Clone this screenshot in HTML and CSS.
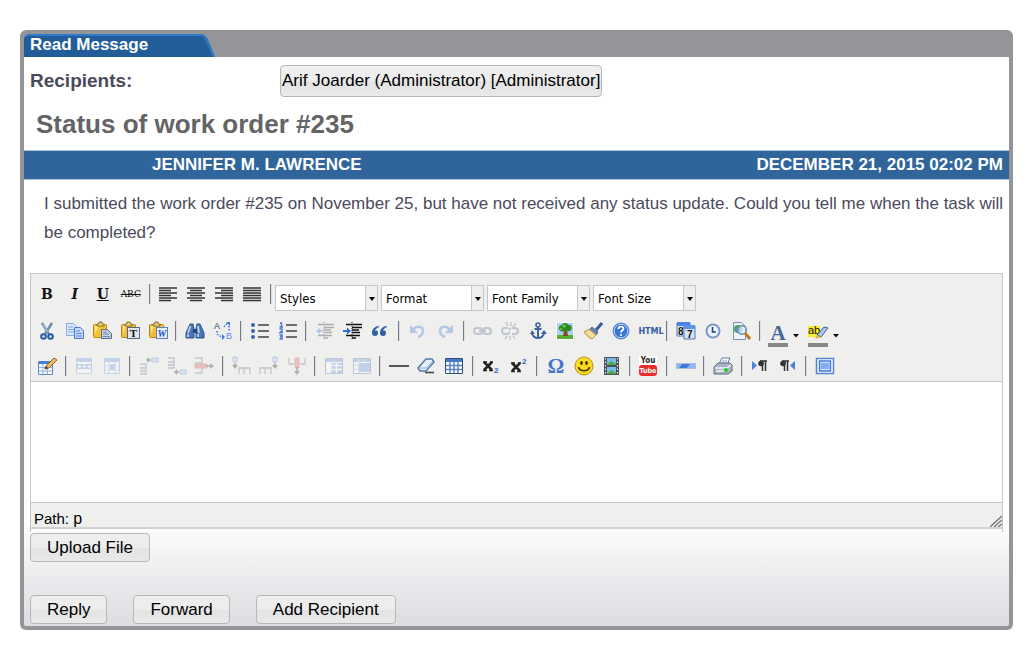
FILE: index.html
```html
<!DOCTYPE html>
<html lang="en">
<head>
    <meta charset="utf-8">
    <title>Read Message</title>
    <link rel="stylesheet" href="styles.css">
</head>
<body>
    <div class="panel">
        <div class="panel-head">
            <h1 class="tab">Read Message</h1>
            <svg class="tab-end" viewBox="0 0 16 23"><path d="M0 0C5 0 7 2 9 6L16 23H0z" fill="#235d99"/><path d="M0 1C5 1 6 3 8 7L15 23" fill="none" stroke="#3079ca" stroke-width="2"/></svg>
        </div>

        <div class="recipients">
            <span class="recipients-label">Recipients:</span>
            <button type="button" class="btn recipient">Arif Joarder (Administrator) [Administrator]</button>
        </div>

        <h2 class="subject">Status of work order #235</h2>

        <div class="message-bar">
            <span>JENNIFER M. LAWRENCE</span>
            <span>DECEMBER 21, 2015 02:02 PM</span>
        </div>
        <p class="message">I submitted the work order #235 on November 25, but have not received any status update. Could you tell me when the task will be completed?</p>

        <div class="editor">
            <div class="toolbar">
                <div class="row row-format">
                    <div class="tools tools-format">
                        <button type="button" class="tool glyph" title="Bold">B</button>
                        <button type="button" class="tool glyph italic" title="Italic">I</button>
                        <button type="button" class="tool glyph underline" title="Underline">U</button>
                        <button type="button" class="tool glyph strike" title="Strikethrough">ABC</button>
                        <span class="sep"></span>
                        <button type="button" class="tool" title="Align left"><svg viewBox="0 0 20 20"><path d="M1 4h18M1 6.500h12M1 9h18M1 11.500h12M1 14h18M1 16.500h12" stroke="#333" stroke-width="1.300"/></svg></button>
                        <button type="button" class="tool" title="Align center"><svg viewBox="0 0 20 20"><path d="M1 4h18M4 6.500h12M1 9h18M4 11.500h12M1 14h18M4 16.500h12" stroke="#333" stroke-width="1.300"/></svg></button>
                        <button type="button" class="tool" title="Align right"><svg viewBox="0 0 20 20"><path d="M1 4h18M7 6.500h12M1 9h18M7 11.500h12M1 14h18M7 16.500h12" stroke="#333" stroke-width="1.300"/></svg></button>
                        <button type="button" class="tool" title="Align full"><svg viewBox="0 0 20 20"><path d="M1 4h18M1 6.500h18M1 9h18M1 11.500h18M1 14h18M1 16.500h18" stroke="#333" stroke-width="1.300"/></svg></button>
                        <span class="sep"></span>
                    </div>
                    <div class="lists">
                        <span class="list"><select aria-label="Styles"><option>Styles</option></select></span>
                        <span class="list"><select aria-label="Format"><option>Format</option></select></span>
                        <span class="list"><select aria-label="Font Family"><option>Font Family</option></select></span>
                        <span class="list"><select aria-label="Font Size"><option>Font Size</option></select></span>
                    </div>
                </div>

                <div class="row tools tools-edit">
                    <button type="button" class="tool" title="Cut"><svg viewBox="0 0 20 20"><path d="M5 2l7 11M15 2L8 13" stroke="#6d8aa8" stroke-width="2.400"/><path d="M6 3l5 8" stroke="#c5d6e6"/><circle cx="6.500" cy="15.500" r="2.300" fill="none" stroke="#2459a8" stroke-width="2"/><circle cx="13.500" cy="15.500" r="2.300" fill="none" stroke="#2459a8" stroke-width="2"/></svg></button>
                    <button type="button" class="tool" title="Copy"><svg viewBox="0 0 20 20"><path d="M1.500 2.500h7l3 3v9h-10z" fill="#dbe8ff" stroke="#86a9e6"/><path d="M3 6h5M3 8.500h6M3 11h6" stroke="#7fa5e8"/><path d="M9.500 6.500h6l3 3v8h-9z" fill="#c3d8fd" stroke="#4b79cf"/><path d="M11 10h4M11 12.500h6M11 15h6" stroke="#5b8ae0"/></svg></button>
                    <button type="button" class="tool" title="Paste"><svg viewBox="0 0 20 20"><rect x="1.500" y="3.500" width="13" height="13" rx="1" fill="#f2c230" stroke="#b98b14"/><path d="M3 5l4 0-4 8z" fill="#ffe889"/><path d="M5 5V3h2V1h3v2h2v2z" fill="#eedc96" stroke="#8a6c1c"/><path d="M9.500 8.500h6l4 4v5h-10z" fill="#c7d4e4" stroke="#5a6b80"/><path d="M11 11h4M11 13h6M11 15.500h7" stroke="#6d87a5"/></svg></button>
                    <button type="button" class="tool" title="Paste as plain text"><svg viewBox="0 0 20 20"><rect x="1.500" y="3.500" width="14" height="13" rx="1" fill="#f0bd3c" stroke="#b78218"/><path d="M3 5h3l-3 8z" fill="#ffe491"/><path d="M5 5V3h2V1h3v2h2v2z" fill="#eedc96" stroke="#8a6c1c"/><rect x="7.500" y="6.500" width="12" height="11" fill="#dfe6f0" stroke="#55677f"/><text x="13.500" y="16" class="serif" font-size="11" text-anchor="middle" fill="#111">T</text></svg></button>
                    <button type="button" class="tool" title="Paste from Word"><svg viewBox="0 0 20 20"><rect x="1.500" y="3.500" width="14" height="13" rx="1" fill="#f0bd3c" stroke="#b78218"/><path d="M3 5h3l-3 8z" fill="#ffe491"/><path d="M5 5V3h2V1h3v2h2v2z" fill="#eedc96" stroke="#8a6c1c"/><rect x="8.500" y="6.500" width="11" height="11" fill="#e3efff" stroke="#5d83b8"/><text x="14" y="16" class="serif slant" font-size="10" text-anchor="middle" fill="#1e55b5">W</text></svg></button>
                    <span class="sep"></span>
                    <button type="button" class="tool" title="Find"><svg viewBox="0 0 20 20"><path d="M5 3h3l1 5v9H1v-5zM12 3h3l4 9v5h-8V8z" fill="#4a74b4" stroke="#2c5290"/><path d="M8 8h4v4H8z" fill="#244a86"/><path d="M5.500 5L3 12M13 5l1 7M3 13v3M13 13v3" stroke="#b8d3f3" stroke-width="1.800"/></svg></button>
                    <button type="button" class="tool" title="Replace"><svg viewBox="0 0 20 20"><text x="1" y="8" class="sans light" font-size="9" fill="#223e74">A</text><text x="13" y="18" class="sans light" font-size="9" fill="#5a8ae8">B</text><path d="M4 10c0 3 1 5 6 6M11 6c1-2 2-3 4-3M16 5v5" fill="none" stroke="#3f76e3" stroke-width="1.500" stroke-dasharray="1.500 1.500"/><path d="M9 13l3 3-3 3zM13 1h4v4z" fill="#3f76e3"/></svg></button>
                    <span class="sep"></span>
                    <button type="button" class="tool" title="Bullet list"><svg viewBox="0 0 20 20"><path d="M8 4h11M8 10h11M8 16h11" stroke="#444" stroke-width="1.600"/><g fill="#3966ad"><circle cx="3" cy="4" r="2"/><circle cx="3" cy="10" r="2"/><circle cx="3" cy="16" r="2"/></g></svg></button>
                    <button type="button" class="tool" title="Numbered list"><svg viewBox="0 0 20 20"><path d="M8 4h11M8 10h11M8 16h11" stroke="#444" stroke-width="1.600"/><path d="M2 2h1.500v4M1.500 6H5M1.500 8H4v2L2 11.500h3M1.500 14H4v4H1.500M2 16h2" fill="none" stroke="#3f73dd" stroke-width="1.300"/></svg></button>
                    <span class="sep"></span>
                    <button type="button" class="tool off" title="Outdent"><svg viewBox="0 0 20 20"><path d="M3 3.500h16M9 6.500h10M9 9h7M9 11.500h8M3 14.500h14M9 17h4" stroke="#333" stroke-width="1.500"/><path d="M9 1v18" stroke="#222" stroke-dasharray="1 1"/><path d="M1 10l4-3v2h3v2H5v2z" fill="#3c78e6"/></svg></button>
                    <button type="button" class="tool" title="Indent"><svg viewBox="0 0 20 20"><path d="M3 3.500h16M9 6.500h10M9 9h7M9 11.500h8M3 14.500h14M9 17h4" stroke="#111" stroke-width="1.700"/><path d="M9 1v18" stroke="#111" stroke-dasharray="1 1"/><path d="M8 10L4 6.500V9H0v2h4v2.500z" fill="#2c6be0"/></svg></button>
                    <button type="button" class="tool" title="Blockquote"><svg viewBox="0 0 20 20"><path d="M9 5C5 5 2 8 2 12c0 2 1 3 3 3s3-1 3-3-1-3-3-2c0-2 2-3 4-4zM17 5c-4 0-7 3-7 7 0 2 1 3 3 3s3-1 3-3-1-3-3-2c0-2 2-3 4-4z" fill="#315fa4"/></svg></button>
                    <span class="sep"></span>
                    <button type="button" class="tool off" title="Undo"><svg viewBox="0 0 20 20"><path d="M5 9c3-5 10-4 10 1 0 3-2 5-5 6" fill="none" stroke="#4b7bdc" stroke-width="2.600"/><path d="M2 4v8h8z" fill="#4b7bdc"/></svg></button>
                    <button type="button" class="tool off" title="Redo"><svg viewBox="0 0 20 20"><path d="M15 9C12 4 5 5 5 10c0 3 2 5 5 6" fill="none" stroke="#4b7bdc" stroke-width="2.600"/><path d="M18 4v8h-8z" fill="#4b7bdc"/></svg></button>
                    <span class="sep"></span>
                    <button type="button" class="tool off" title="Link"><svg viewBox="0 0 20 20"><rect x="2" y="7" width="8" height="6" rx="3" fill="none" stroke="#657a9e" stroke-width="2"/><rect x="11" y="7" width="8" height="6" rx="3" fill="none" stroke="#657a9e" stroke-width="2"/><path d="M7 10h7" stroke="#657a9e" stroke-width="2"/></svg></button>
                    <button type="button" class="tool off" title="Unlink"><svg viewBox="0 0 20 20"><path d="M8 7H5a3 3 0 000 6h3l2-2M12 7h3a3 3 0 010 6h-3M9 9l2-2" fill="none" stroke="#657a9e" stroke-width="2"/><path d="M6 1l2 4M11 1v4M16 2l-3 4M5 18l2-3M10 19v-4M15 18l-2-3" stroke="#7d848e" stroke-width="1.500"/></svg></button>
                    <button type="button" class="tool" title="Anchor"><svg viewBox="0 0 20 20"><circle cx="10" cy="4" r="2" fill="none" stroke="#3f659d" stroke-width="1.600"/><path d="M10 6v11M6.500 8h7M4 12c0 3 3 5 6 5s6-2 6-5" fill="none" stroke="#3f659d" stroke-width="2"/><path d="M2 13l2-4 3 4zM13 13l3-4 3 4z" fill="#3f659d"/></svg></button>
                    <button type="button" class="tool" title="Image"><svg viewBox="0 0 20 20"><path d="M1 1h18v18H1z" fill="#fff"/><path d="M2 2h16v12H2z" fill="#a9d0f7"/><path d="M2 14h16v4H2z" fill="#55b02d"/><path d="M9 9h3l1 6H8z" fill="#805020"/><path d="M4 8c-1-3 2-4 3-4 1-3 6-2 6 0 3-1 5 3 3 5-1 2-4 1-5 1-3 1-6 1-7-2z" fill="#2f8b21"/><circle cx="9" cy="5" r="1.500" fill="#75c34b"/><circle cx="6" cy="8" r="1" fill="#75c34b"/></svg></button>
                    <button type="button" class="tool" title="Clean up code"><svg viewBox="0 0 20 20"><path d="M19 2l-6 7" stroke="#3b5f9c" stroke-width="3"/><path d="M9 6l6 5-2 3-7-5z" fill="#6484b4" stroke="#476699"/><path d="M6 8l7 6-4 4C6 17 3 14 1 11z" fill="#efd48a" stroke="#b99b52"/><path d="M4 11l6 5M6 10l5 5" stroke="#fff0b8"/></svg></button>
                    <button type="button" class="tool" title="Help"><svg viewBox="0 0 20 20"><circle cx="10" cy="10" r="8" fill="#3775d9" stroke="#5e87cf"/><circle cx="10" cy="10" r="6.800" fill="none" stroke="#c4d8f6"/><path d="M7.500 8c0-3 5-3 5-.5 0 2-2.500 2-2.500 4" fill="none" stroke="#fff" stroke-width="1.800"/><circle cx="10" cy="14" r="1.100" fill="#fff"/></svg></button>
                    <button type="button" class="tool html" title="Edit HTML source">HTML</button>
                    <span class="sep"></span>
                    <button type="button" class="tool" title="Insert date"><svg viewBox="0 0 20 20"><path d="M1 2h13v13H1z" fill="#e4edfa" stroke="#5277b3"/><path d="M1 1h13v4H1z" fill="#4b84e6"/><text x="2" y="14" class="sans" font-size="10" fill="#111">8</text><path d="M8 5h11v13H8z" fill="#d6e3f5" stroke="#5277b3"/><path d="M7 4h12v4H7z" fill="#5e92eb"/><text x="11" y="17" class="sans" font-size="10" fill="#111">7</text></svg></button>
                    <button type="button" class="tool" title="Insert time"><svg viewBox="0 0 20 20"><circle cx="10" cy="10" r="6.500" fill="#edf4ff" stroke="#7796c9" stroke-width="2"/><path d="M9.500 6v5H13" fill="none" stroke="#244278" stroke-width="1.600"/></svg></button>
                    <button type="button" class="tool" title="Preview"><svg viewBox="0 0 20 20"><path d="M2.500 1.500h8l4 4v13h-12z" fill="#eef4fc" stroke="#7890b0"/><circle cx="7" cy="8" r="4" fill="#4ba65d"/><path d="M4 7l4 0 2 4-4 1z" fill="#5b92d6"/><circle cx="11" cy="9" r="4.300" fill="#d9eaff" fill-opacity=".7" stroke="#71899f" stroke-width="1.500"/><path d="M14 12l5 6" stroke="#bd7b28" stroke-width="3"/></svg></button>
                    <span class="sep"></span>
                    <button type="button" class="tool split" title="Text color"><svg viewBox="0 0 32 26"><text x="10" y="19" class="serif" font-size="21" text-anchor="middle" fill="#44659c">A</text><path d="M0 22h20v4H0z" fill="#888"/><path d="M25 13h6l-3 3.500z" fill="#111"/></svg></button>
                    <button type="button" class="tool split" title="Background color"><svg viewBox="0 0 32 26"><path d="M0 5h12v11H0z" fill="#f7ec28"/><text x="0" y="13" class="sans light" font-size="11" fill="#111">ab</text><path d="M16 6l4 1-7 9-4-2z" fill="#a9c6f0" stroke="#3a5f9c"/><path d="M9 14l4 2-6 2z" fill="#d5b15a"/><path d="M0 22h20v4H0z" fill="#888"/><path d="M25 13h6l-3 3.500z" fill="#111"/></svg></button>
                </div>

                <div class="row tools tools-table">
                    <button type="button" class="tool" title="Insert table"><svg viewBox="0 0 20 20"><path d="M1.500 5.500h14v13h-14z" fill="#f5f9ff" stroke="#5e85c0"/><path d="M2 5h13v3H2z" fill="#4c80d8"/><path d="M2 11.500h13M2 15h13M6 8v10M10.500 8v10" stroke="#94b3df"/><path d="M8 13l1-3 8-8 3 2-8 8z" fill="#edbb5c" stroke="#8d6125"/><path d="M8 13l1-3 2 2z" fill="#333"/></svg></button>
                    <span class="sep"></span>
                    <button type="button" class="tool off" title="Table row properties"><svg viewBox="0 0 20 20"><path d="M2.500 2.500h15v15h-15z" fill="#fff" stroke="#839fc9"/><path d="M2 2h16v4H2zM2 8h16v5H2z" fill="#719ee8"/><path d="M4 10.500h3M9 10.500h3M14 10.500h3M4 15.500h3M9 15.500h3M14 15.500h3" stroke="#fff" stroke-width="2"/></svg></button>
                    <button type="button" class="tool off" title="Table cell properties"><svg viewBox="0 0 20 20"><path d="M2.500 2.500h15v15h-15z" fill="#fff" stroke="#839fc9"/><path d="M2 2h16v4H2zM8 8h5v6H8z" fill="#719ee8"/><path d="M3 10h14M3 14h14M7 6v11M13 6v11" stroke="#9ab6e3"/></svg></button>
                    <span class="sep"></span>
                    <button type="button" class="tool off" title="Insert row before"><svg viewBox="0 0 20 20"><path d="M1 8h6v4H1M7 12v6H1M1 15h6" fill="none" stroke="#6e7b91" stroke-width="1.300"/><path d="M13 2h6v4h-6z" fill="#b7cff4" stroke="#5887d1"/><path d="M12 4H9" stroke="#333" stroke-width="1.500"/><path d="M10 1v6L7 4z" fill="#333"/></svg></button>
                    <button type="button" class="tool off" title="Insert row after"><svg viewBox="0 0 20 20"><path d="M1 2h6v4H1M7 6v6H1M1 9h6" fill="none" stroke="#6e7b91" stroke-width="1.300"/><path d="M13 14h6v4h-6z" fill="#b7cff4" stroke="#5887d1"/><path d="M12 16H9" stroke="#333" stroke-width="1.500"/><path d="M10 13v6l-3-3z" fill="#333"/></svg></button>
                    <button type="button" class="tool off" title="Delete row"><svg viewBox="0 0 20 20"><path d="M1 2h7v5H1M8 12v5H1" fill="none" stroke="#6e7b91" stroke-width="1.300"/><path d="M1 8h12v4H1z" fill="#ee6860" stroke="#c75e58"/><path d="M12 10h7" stroke="#333" stroke-width="1.500"/><path d="M16 7l4 3-4 3z" fill="#444"/></svg></button>
                    <span class="sep"></span>
                    <button type="button" class="tool off" title="Insert column before"><svg viewBox="0 0 20 20"><path d="M8 18v-6h5v6M13 12h6v6" fill="none" stroke="#6e7b91" stroke-width="1.300"/><path d="M2 1h4v5H2z" fill="#b7cff4" stroke="#5887d1"/><path d="M4 7v4" stroke="#333" stroke-width="1.500"/><path d="M1 9h6l-3 4z" fill="#333"/></svg></button>
                    <button type="button" class="tool off" title="Insert column after"><svg viewBox="0 0 20 20"><path d="M1 18v-6h5v6M6 12h6v6" fill="none" stroke="#6e7b91" stroke-width="1.300"/><path d="M14 1h4v5h-4z" fill="#b7cff4" stroke="#5887d1"/><path d="M16 7v4" stroke="#333" stroke-width="1.500"/><path d="M13 9h6l-3 4z" fill="#333"/></svg></button>
                    <button type="button" class="tool off" title="Delete column"><svg viewBox="0 0 20 20"><path d="M2 2v6h5M18 2v6h-5" fill="none" stroke="#6e7b91" stroke-width="1.300"/><path d="M8 2h4v10H8z" fill="#ee6860" stroke="#c75e58"/><path d="M10 11v6" stroke="#333" stroke-width="1.500"/><path d="M7 15h6l-3 4z" fill="#444"/></svg></button>
                    <span class="sep"></span>
                    <button type="button" class="tool off" title="Split cells"><svg viewBox="0 0 20 20"><path d="M1.500 2.500h17v15h-17z" fill="#fff" stroke="#66778f"/><path d="M2 3h16v3H2zM7 7h11v10H7z" fill="#6c99e4"/><path d="M2 9.500h16M2 13.500h16M6.500 6v11M12.500 6v11" stroke="#fff" stroke-width="1.500"/></svg></button>
                    <button type="button" class="tool off" title="Merge cells"><svg viewBox="0 0 20 20"><path d="M1.500 2.500h17v15h-17z" fill="#fff" stroke="#66778f"/><path d="M2 3h16v3H2zM7 7h11v9H7z" fill="#6c99e4"/><path d="M2 9.500h4M2 13.500h4M6.500 3v14M12.500 3v3" stroke="#b8caea" stroke-width="1.500"/></svg></button>
                    <span class="sep"></span>
                    <button type="button" class="tool" title="Horizontal rule"><svg viewBox="0 0 20 20"><path d="M0 10h20" stroke="#444" stroke-width="1.800"/></svg></button>
                    <button type="button" class="tool" title="Remove formatting"><svg viewBox="0 0 20 20"><path d="M2 12L10 3h6l2 3-8 9H4z" fill="#e7f1ff" stroke="#5578ac" stroke-width="1.500"/><path d="M4 12h6l7-7" fill="none" stroke="#8caddb"/><path d="M9 16.500h9" stroke="#444" stroke-width="1.600"/></svg></button>
                    <button type="button" class="tool" title="Toggle guidelines"><svg viewBox="0 0 20 20"><path d="M1.500 2.500h17v15h-17z" fill="#fff" stroke="#344b75"/><path d="M2 3h16v3H2z" fill="#4679d2"/><path d="M2 9.500h16M2 13.500h16M6 6v11M10 6v11M14 6v11" stroke="#5a83c8" stroke-width="1.500"/></svg></button>
                    <span class="sep"></span>
                    <button type="button" class="tool" title="Subscript"><svg viewBox="0 0 20 20"><path d="M3 6l8 8M11 6l-8 8" stroke="#222" stroke-width="2.500"/><path d="M2 6h4M9 6h3M2 14.500h4M8 14.500h4" stroke="#222" stroke-width="1.300"/><text x="13" y="17" class="sans" font-size="8" fill="#2c63c7">2</text></svg></button>
                    <button type="button" class="tool" title="Superscript"><svg viewBox="0 0 20 20"><path d="M3 7l8 8M11 7l-8 8" stroke="#222" stroke-width="2.500"/><path d="M2 7h4M9 7h3M2 15.500h4M8 15.500h4" stroke="#222" stroke-width="1.300"/><text x="13" y="8" class="sans" font-size="8" fill="#2c63c7">2</text></svg></button>
                    <span class="sep"></span>
                    <button type="button" class="tool" title="Insert special character"><svg viewBox="0 0 20 20"><text x="10" y="17" class="serif" font-size="21" text-anchor="middle" fill="#4676cc">Ω</text></svg></button>
                    <button type="button" class="tool" title="Emotions"><svg viewBox="0 0 20 20"><circle cx="10" cy="10" r="9" fill="#fadb20" stroke="#b79418"/><ellipse cx="7.500" cy="7" rx="1.300" ry="2" fill="#332a0c"/><ellipse cx="12.500" cy="7" rx="1.300" ry="2" fill="#332a0c"/><path d="M4.500 11c1 5 10 5 11 0" fill="none" stroke="#4a390d" stroke-width="1.500"/></svg></button>
                    <button type="button" class="tool" title="Insert media"><svg viewBox="0 0 20 20"><path d="M3 1h15v18H3z" fill="#4b5157"/><path d="M6 2h9v7H6zM6 11h9v7H6z" fill="#77bce9"/><path d="M6 9l4-4 5 3v1zM6 18l4-4 5 3v1z" fill="#54a843"/><path d="M4.500 2v17M16.500 2v17" stroke="#dfe3e6" stroke-width="1.200" stroke-dasharray="1.500 2"/></svg></button>
                    <span class="sep"></span>
                    <button type="button" class="tool" title="YouTube"><svg viewBox="0 0 20 20"><path d="M1 0h18v20H1z" fill="#fff"/><rect x="1" y="9" width="18" height="11" rx="3" fill="#e92e2c"/><text x="10" y="7" class="narrow" font-size="8" text-anchor="middle" fill="#222">You</text><text x="10" y="17" class="narrow" font-size="7" text-anchor="middle" fill="#fff">Tube</text></svg></button>
                    <span class="sep"></span>
                    <button type="button" class="tool" title="Horizontal line"><svg viewBox="0 0 20 20"><path d="M.5 7.500h19v5H.5z" fill="#3f7ad8" stroke="#a9bddf"/><path d="M1 8h5l-3 4H1zM14 8h5v4h-8z" fill="#8fb7f2"/></svg></button>
                    <span class="sep"></span>
                    <button type="button" class="tool" title="Print"><svg viewBox="0 0 20 20"><path d="M6 8l3-6h8l-3 7z" fill="#f8fbff" stroke="#627796"/><path d="M9 5h5M8 7h5" stroke="#91a5c1"/><path d="M1 11l4-4h12l2 2v6l-4 3H1z" fill="#a9b5c5" stroke="#5f6c7f"/><path d="M2 12h12l4-3" fill="none" stroke="#f1f5f9" stroke-width="1.500"/><path d="M3 15h8" stroke="#f3f6f9" stroke-width="1.500"/><circle cx="13" cy="14" r="2" fill="#21cc24"/></svg></button>
                    <span class="sep"></span>
                    <button type="button" class="tool" title="Left to right"><svg viewBox="0 0 20 20"><path d="M2 5v9l5-4.500z" fill="#4a82df"/><path d="M10 5h7M12.500 5v10M15.500 5v10" stroke="#333" stroke-width="1.500"/><circle cx="11" cy="7.500" r="2.800" fill="#333"/></svg></button>
                    <button type="button" class="tool" title="Right to left"><svg viewBox="0 0 20 20"><path d="M17 5v9l-5-4.500z" fill="#4a82df"/><path d="M4 5h7M6.500 5v10M9.500 5v10" stroke="#333" stroke-width="1.500"/><circle cx="5" cy="7.500" r="2.800" fill="#333"/></svg></button>
                    <span class="sep"></span>
                    <button type="button" class="tool" title="Fullscreen"><svg viewBox="0 0 20 20"><rect x="1.500" y="2.500" width="17" height="15" fill="#fff" stroke="#5683d1" stroke-width="1.500"/><path d="M4.500 5h11v10h-11z" fill="#d2e2fc" stroke="#4079df" stroke-width="1.500"/><path d="M6 8h8M6 10h8M6 12h8" stroke="#3976df"/></svg></button>
                </div>
            </div>
            <textarea class="editor-body" aria-label="Reply text"></textarea>
            <div class="status">
                <div class="path">Path: <a href="#">p</a></div>
                <svg class="grip" viewBox="0 0 12 12"><path d="M0 12L12 1M4 12l8-7M8 12l4-3" stroke="#777" stroke-width="1.300"/></svg>
            </div>
        </div>

        <div class="upload">
            <button type="button" class="btn">Upload File</button>
        </div>
        <div class="actions">
            <button type="button" class="btn">Reply</button>
            <button type="button" class="btn">Forward</button>
            <button type="button" class="btn">Add Recipient</button>
        </div>
    </div>
</body>
</html>
```
FILE: styles.css
```css
* { box-sizing: border-box; }
body { margin: 30px 19px 0 20px; background: white; font-family: "Liberation Sans", Arial, sans-serif; font-size: 17px; color: #4b4a5c; }
.panel { border: 4px solid #939598; border-radius: 6px; background: linear-gradient(to top, #dcdde0, #ebecee 50px, #fdfdfd 100px, white 110px); box-shadow: 0 2px 2px #eee; }
.panel-head { display: flex; height: 23px; background: #939598; }
.tab { width: 175px; margin: 0; padding-left: 6px; border-top: 2px solid #3079ca; border-top-left-radius: 5px; background: #235d99; color: white; font-size: 17px; line-height: 17px; }
.tab-end { width: 16px; height: 23px; }

.recipients { display: flex; align-items: center; padding: 8px 6px 0; }
.recipients-label { width: 250px; font-size: 19px; font-weight: bold; }
.btn { height: 29px; padding: 0 16px; border: 1px solid #b7b7b7; border-radius: 4px; background: linear-gradient(#efefef, #ececec 50%, #e3e3e3 52%, #e9e9e9); color: black; font-family: inherit; font-size: 17px; cursor: pointer; }
.btn.recipient { height: 32px; padding: 0 1px; }
.subject { margin: 0; padding: 12px 12px 11px; color: #636466; font-size: 26px; line-height: 30px; }
.message-bar { display: flex; justify-content: space-between; padding: 0 6px 0 128px; border-top: 1px solid #a9c2da; border-bottom: 1px solid #a9c2da; background: #2f659b; color: white; font-weight: bold; line-height: 28px; }
.message { margin: 0; padding: 9px 4px 26px 20px; line-height: 29px; }

.editor { margin: 0 6px; padding-bottom: 3px; border: 1px solid #c6c6c6; border-bottom: none; }
.toolbar { padding: 10px 6px 5px; border-bottom: 1px solid #c6c6c6; background: #efefee; }
.row { display: flex; }
.row-format { height: 27px; }
.tools { display: flex; justify-content: space-between; }
.tools-format { width: 235px; }
.tools-edit { max-width: 803px; margin: 10px 0 9px; }
.tools-table { max-width: 798px; }
.tool { width: 20px; height: 20px; padding: 0; border: none; background: none; color: #111; cursor: pointer; }
.tool svg { display: block; width: 100%; height: 100%; }
.tool.split { width: 32px; height: 26px; }
.tool.off { opacity: 0.35; }
.glyph { font: bold 14px "DejaVu Serif", serif; }
.italic { font-style: italic; }
.underline { text-decoration: underline; }
.strike { font-size: 9px; font-weight: normal; text-decoration: line-through; }
.html { color: #3460a4; font: bold 8px "DejaVu Sans", sans-serif; }
.sep { width: 2px; height: 20px; border-left: 1px solid #777a88; border-right: 1px solid #dcdce0; }
.serif { font-family: "Liberation Serif", serif; font-weight: bold; }
.slant { font-style: italic; }
.sans { font-family: "Liberation Sans", sans-serif; font-weight: bold; }
.light { font-weight: normal; }
.narrow { font-family: "DejaVu Sans Condensed", "Liberation Sans", sans-serif; font-weight: bold; }

.lists { display: flex; gap: 3px; padding: 1px 0 0 3px; }
.list { position: relative; width: 103px; height: 26px; }
.list select { width: 100%; height: 100%; padding: 0 16px 0 4px; border: 1px solid #c6c6c6; border-radius: 0; background: linear-gradient(to left, #efefee 11px, #c6c6c6 11px, #c6c6c6 12px, white 12px); color: black; font: 13px "DejaVu Sans Condensed", "DejaVu Sans", sans-serif; appearance: none; }
.list::after { content: ""; position: absolute; top: 12px; right: 3px; border: 3px solid transparent; border-top: 4px solid black; border-bottom: none; pointer-events: none; }

.editor-body { display: block; width: 100%; height: 120px; border: none; background: white; resize: none; }
.status { display: flex; justify-content: space-between; align-items: flex-end; height: 27px; border-top: 1px solid #c6c6c6; border-bottom: 2px solid #d2d2d2; background: #efefee; }
.path { padding-left: 3px; color: black; font-size: 15px; line-height: 16px; }
.path a { color: black; font-size: 16px; text-decoration: none; }
.grip { width: 12px; height: 12px; }

.upload { padding: 1px 6px 33px; }
.upload .btn, .actions .btn { display: block; }
.actions { display: flex; gap: 26px; padding: 0 6px 2px; }
```
